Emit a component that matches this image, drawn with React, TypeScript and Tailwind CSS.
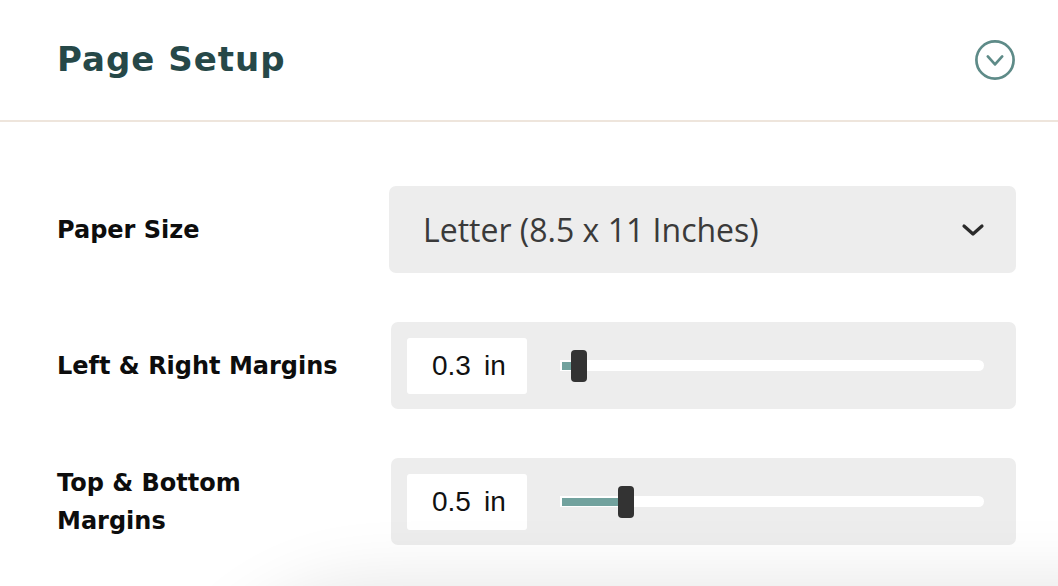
import React from "react";

type SliderRowProps = {
  label: React.ReactNode;
  value: number;
  thumbLeft: number;
};

const headingFont = "font-['DejaVu_Sans','Open_Sans',sans-serif]";

function Chevron({ className }: { className?: string }) {
  return (
    <svg viewBox="0 0 24 14" className={className} fill="none">
      <path d="M3 3 L12 11 L21 3" stroke="currentColor" strokeWidth="3.2" strokeLinecap="round" strokeLinejoin="round" />
    </svg>
  );
}

function CollapseIcon() {
  return (
    <svg width="42" height="42" viewBox="0 0 42 42" fill="none" className="text-[#5e8b88]">
      <circle cx="21" cy="21" r="18.6" stroke="currentColor" strokeWidth="2.7" />
      <path d="M13.8 17.4 L21 25.4 L28.2 17.4" stroke="currentColor" strokeWidth="2.7" strokeLinecap="round" strokeLinejoin="round" />
    </svg>
  );
}

function SliderRow({ label, value, thumbLeft }: SliderRowProps) {
  return (
    <div className="grid grid-cols-[334px_1fr] items-center">
      <div className={`${headingFont} text-[24px] font-bold leading-[38px] text-[#0d0d0d] pr-[34px]`}>{label}</div>
      <div className="h-[87px] rounded-[7px] bg-[#ededed] flex items-center pl-[16px] pr-[32px]">
        <div className="w-[120px] h-[56px] rounded-[3px] bg-white flex items-center pl-[25px] font-['Liberation_Sans',Arial,sans-serif] text-[28px] text-[#111]">
          <span>{value.toFixed(1)}</span>
          <span className="ml-[13px]">in</span>
        </div>
        <div className="relative flex-1 ml-[33px] h-[11px] rounded-r-full bg-white flex items-center pl-[2px]">
          <div className="h-[8px] bg-[#72a29e]" style={{ width: thumbLeft }} />
          <div
            className="absolute top-1/2 -translate-y-1/2 w-[16px] h-[32px] rounded-[4px] bg-[#333]"
            style={{ left: thumbLeft }}
          />
        </div>
      </div>
    </div>
  );
}

export default function App() {
  return (
    <div className="relative w-[1058px] h-[586px] overflow-hidden bg-white font-['Open_Sans','Noto_Sans',sans-serif]">
      <header className="h-[122px] flex items-center justify-between pl-[57px] pr-[42px] border-b-2 border-[#eee5dc]">
        <h1 className={`${headingFont} text-[34px] font-bold tracking-[1px] text-[#264848] pb-[1px]`}>Page Setup</h1>
        <CollapseIcon />
      </header>

      <div className="pl-[57px] pr-[42px] pt-[64px] flex flex-col gap-[49px]">
        <div className="grid grid-cols-[332px_1fr] items-center">
          <div className={`${headingFont} text-[24px] font-bold text-[#0d0d0d]`}>Paper Size</div>
          <div className="h-[87px] rounded-[7px] bg-[#ededed] flex items-center justify-between pl-[34px] pr-[31px]">
            <span className="text-[32px] font-normal text-[#3a3a3a]">Letter (8.5 x 11 Inches)</span>
            <Chevron className="w-[24px] h-[14px] text-[#2a2a2a]" />
          </div>
        </div>

        <SliderRow label="Left & Right Margins" value={0.3} thumbLeft={11} />
        <SliderRow label="Top & Bottom Margins" value={0.5} thumbLeft={58} />
      </div>

      {/* soft shadow cast by the floating footer below the fold */}
      <div className="absolute left-[180px] right-[-80px] top-[594px] h-[200px] rounded-tl-[280px] bg-white shadow-[0_-12px_70px_rgba(0,0,0,0.1)]" />
    </div>
  );
}
